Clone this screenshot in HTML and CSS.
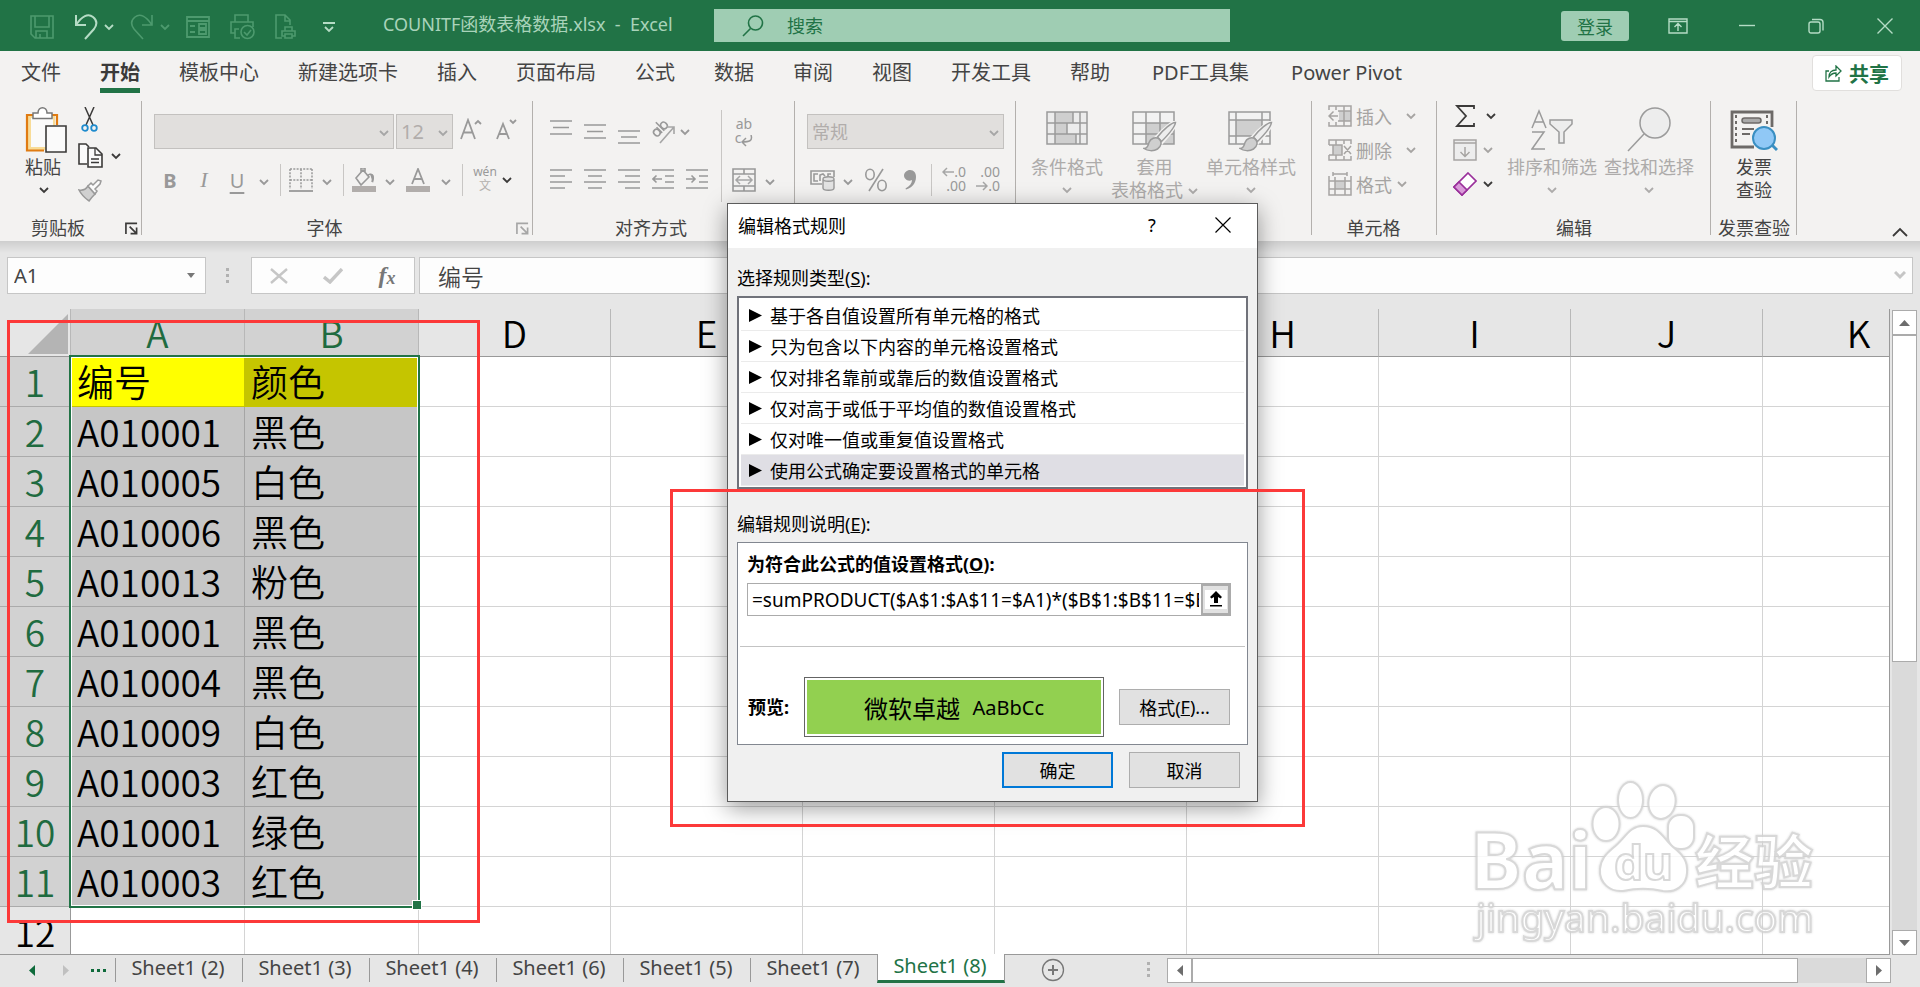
FILE: index.html
```html
<!DOCTYPE html>
<html lang="zh-CN">
<head>
<meta charset="utf-8">
<title>COUNITF函数表格数据.xlsx - Excel</title>
<link rel="stylesheet" href="styles.css">
</head>
<body>
<svg class="defs" aria-hidden="true">
  <symbol id="chev" viewBox="0 0 10 10"><path d="M1 3l4 4 4-4" fill="none" stroke="currentColor" stroke-width="1.8"/></symbol>
  <symbol id="launch" viewBox="0 0 14 14"><path d="M1 13V1.500h12M5 5l7 7M12.500 6v6.500H6" fill="none" stroke="currentColor" stroke-width="1.800"/></symbol>
  <symbol id="brush" viewBox="0 0 34 32"><path d="M33 1c-3 0-12 7-19 15l5 5C26 13 33 5 33 1z" fill="#f3f2f1" stroke="#f3f2f1" stroke-width="4"/><path d="M32.500 1.500C29 1 20 9 14.500 16l4 4.500C26 13 32 5 32.500 1.500z" fill="#ededed" stroke="#9b9b9b" stroke-width="1.500"/><path d="M1 27.500c4 0 4-3 5-6 1.500-4 6.500-6 9.500-4 4 2.500 3 8-1 10.500-4 2.500-10 2-13.500-.500z" fill="#cfcfcf" stroke="#9b9b9b" stroke-width="1.500"/></symbol>
</svg>
<div class="app">
  <header class="titlebar">
    <div class="quick">
      <button class="qbtn dim" aria-label="保存"><svg width="24" height="24" viewBox="0 0 24 24"><path d="M1 1h22v22H5l-4-4zM5 1v11h14V1M6 23v-7h11v7M10 23v-4" fill="none" stroke="currentColor" stroke-width="1.600"/></svg></button>
      <button class="qbtn" aria-label="撤消"><svg width="24" height="26" viewBox="0 0 24 26"><path d="M2 1v10h10M2 11C8 2 14-1 19 3c5 4 4 8 1 12l-9 10" fill="none" stroke="currentColor" stroke-width="2"/></svg></button>
      <svg class="ch qch"><use href="#chev"/></svg>
      <button class="qbtn dim" aria-label="恢复"><svg width="24" height="26" viewBox="0 0 24 26"><path d="M22 1v10H12M22 11C16 2 10-1 5 3 0 7 1 11 4 15l9 10" fill="none" stroke="currentColor" stroke-width="1.600"/></svg></button>
      <svg class="ch qch dim"><use href="#chev"/></svg>
      <button class="qbtn dim" aria-label="窗体"><svg width="24" height="24" viewBox="0 0 24 24"><path d="M1 2h22v20H1zM1 6h22M4 11h5M4 17h5M13 9h7v4h-7zM13 15h7v4h-7z" fill="none" stroke="currentColor" stroke-width="1.800"/></svg></button>
      <button class="qbtn dim" aria-label="打印预览"><svg width="25" height="26" viewBox="0 0 25 26"><path d="M5 8V1h13v7M5 19H1V8h22v5M9 15H5v9h5" fill="none" stroke="currentColor" stroke-width="1.600"/><circle cx="17.500" cy="18" r="6.500" fill="none" stroke="currentColor" stroke-width="1.600"/><path d="M14 18l3 3 4-5" fill="none" stroke="currentColor" stroke-width="1.600"/></svg></button>
      <button class="qbtn dim" aria-label="快速打印"><svg width="22" height="26" viewBox="0 0 22 26"><path d="M7 24H1V1h9l5 5v5M10 1v6h5M10 17v-4h7v4M10 22H7v-5h13v5h-3M10 20h7v4h-7z" fill="none" stroke="currentColor" stroke-width="1.600"/></svg></button>
      <button class="qbtn more" aria-label="自定义快速访问工具栏"><svg width="12" height="11" viewBox="0 0 12 11"><path d="M0 1h12M2 5l4 4 4-4" fill="none" stroke="currentColor" stroke-width="1.800"/></svg></button>
    </div>
    <h1 class="doc">COUNITF函数表格数据.xlsx&nbsp; -&nbsp; Excel</h1>
    <label class="search"><svg width="22" height="22" viewBox="0 0 22 22"><circle cx="13.500" cy="8" r="7" fill="none" stroke="currentColor" stroke-width="1.600"/><path d="M8.500 13.500L1 21" stroke="currentColor" stroke-width="1.600"/></svg><input type="text" placeholder="搜索" aria-label="搜索"></label>
    <div class="window-tools">
      <button class="login">登录</button>
      <button class="win" aria-label="功能区显示选项"><svg width="20" height="16" viewBox="0 0 20 16"><path d="M1 1h18v14H1zM1 3.500h18M10 13V6M6.500 9L10 5.500 13.500 9" fill="none" stroke="currentColor" stroke-width="1.400"/></svg></button>
      <button class="win" aria-label="最小化"><svg width="16" height="16" viewBox="0 0 16 16"><path d="M0 7.500h16" stroke="currentColor" stroke-width="1.400"/></svg></button>
      <button class="win" aria-label="还原"><svg width="16" height="16" viewBox="0 0 16 16"><rect x="1" y="4" width="11" height="11" rx="2" fill="none" stroke="currentColor" stroke-width="1.400"/><path d="M4 1.500h8q3 0 3 3v8" fill="none" stroke="currentColor" stroke-width="1.400"/></svg></button>
      <button class="win" aria-label="关闭"><svg width="16" height="16" viewBox="0 0 16 16"><path d="M.5.5l15 15M15.500.5l-15 15" stroke="currentColor" stroke-width="1.400"/></svg></button>
    </div>
  </header>

  <nav class="menu">
    <button class="tab">文件</button><button class="tab on">开始</button><button class="tab">模板中心</button><button class="tab">新建选项卡</button><button class="tab">插入</button><button class="tab">页面布局</button><button class="tab">公式</button><button class="tab">数据</button><button class="tab">审阅</button><button class="tab">视图</button><button class="tab">开发工具</button><button class="tab">帮助</button><button class="tab latin">PDF工具集</button><button class="tab latin">Power Pivot</button>
    <button class="share"><svg width="17" height="17" viewBox="0 0 17 17"><path d="M4 6H1v10h13v-4M4 12c0-5 3-7 7-7V1l5 5-5 5V8c-3 0-5 1-7 4z" fill="none" stroke="currentColor" stroke-width="1.300"/></svg>共享</button>
  </nav>

  <section class="ribbon">
    <div class="group g-clip">
      <div class="body">
        <button class="big paste"><svg width="42" height="46" viewBox="0 0 42 46"><path d="M3 8h27v35H3z" fill="#f8dc98"/><path d="M6 11h22v29H6z" fill="#fafafa"/><path d="M19 43.500H2V8h8M24 8h8v10" fill="none" stroke="#e07b12" stroke-width="2.200"/><path d="M8 11.500V6h5c0-7 9-7 9 0h5v5.500z" fill="#fff" stroke="#777" stroke-width="1.500"/><path d="M21 19h20v26H21z" fill="#fafafa" stroke="#3b3a39" stroke-width="1.600"/></svg><span>粘贴</span><svg class="ch"><use href="#chev"/></svg></button>
        <div class="clip-side">
          <button class="ic" aria-label="剪切"><svg width="17" height="25" viewBox="0 0 17 25"><path d="M4 0l8 18M13 0L5 18" stroke="#3b3a39" stroke-width="1.500"/><circle cx="4" cy="21" r="2.800" fill="none" stroke="#1e8bcd" stroke-width="1.800"/><circle cx="13" cy="21" r="2.800" fill="none" stroke="#1e8bcd" stroke-width="1.800"/></svg></button>
          <div class="pair"><button class="ic" aria-label="复制"><svg width="25" height="25" viewBox="0 0 25 25"><path d="M9 21H1V1h7l3 3" fill="#fafafa" stroke="#3b3a39" stroke-width="1.600"/><path d="M10 5h8l6 6v13H10z" fill="#fafafa" stroke="#3b3a39" stroke-width="1.600"/><path d="M17 5v7h7M13 16h8M13 19.500h8" fill="none" stroke="#3b3a39" stroke-width="1.300"/></svg></button><svg class="ch"><use href="#chev"/></svg></div>
          <button class="ic" aria-label="格式刷"><svg width="24" height="23" viewBox="0 0 24 23"><path d="M1 11c5 1 7-1 9-4l7 8c-2 2-4 4-6 7C7 19 4 17 1 11z" fill="#d0d0d0" stroke="#999" stroke-width="1.500"/><path d="M10 7l3-3 2 2 5-5 3 1-1 3-5 5 2 2-2 3z" fill="#fafafa" stroke="#999" stroke-width="1.500"/></svg></button>
        </div>
      </div>
      <div class="glabel">剪贴板<svg class="launch"><use href="#launch"/></svg></div>
    </div>

    <div class="group g-font">
      <div class="body rows">
        <div class="row1">
          <label class="combo c-font"><select aria-label="字体"><option></option></select><svg class="ch"><use href="#chev"/></svg></label>
          <label class="combo c-size"><select aria-label="字号"><option>12</option></select><svg class="ch"><use href="#chev"/></svg></label>
          <button class="ic grow" aria-label="增大字号"><svg width="22" height="22" viewBox="0 0 22 22"><path d="M1 21L8 2l7 19M3.500 14.500h9M15 6l3-3 3 3" fill="none" stroke="currentColor" stroke-width="1.800"/></svg></button>
          <button class="ic shrink" aria-label="减小字号"><svg width="22" height="22" viewBox="0 0 22 22"><path d="M1 21L7 6l6 15M3 16h8M14 2l3 3 3-3" fill="none" stroke="currentColor" stroke-width="1.800"/></svg></button>
        </div>
        <div class="row2">
          <button class="t34 bold">B</button><button class="t34 ital">I</button><button class="t34 und">U</button><svg class="ch wide"><use href="#chev"/></svg>
          <i class="vs"></i>
          <button class="t30" aria-label="边框"><svg width="24" height="24" viewBox="0 0 24 24"><path d="M1 1h22M1 1v20M23 1v20M12 1v20M1 12h22" fill="none" stroke="currentColor" stroke-width="1.500" stroke-dasharray="2 1.300"/><path d="M0 23h24" stroke="currentColor" stroke-width="1.800"/></svg></button><svg class="ch wide"><use href="#chev"/></svg>
          <i class="vs"></i>
          <button class="t30" aria-label="填充颜色"><svg width="24" height="24" viewBox="0 0 24 24"><path d="M4 10l7-8 6 7-8 8zM9 5V0h4v4M15 8c4-4 7-1 5 6" fill="none" stroke="currentColor" stroke-width="1.600"/><path d="M18 6c4-1 5 3 3 9z" fill="currentColor"/><path d="M0 18h24v6H0z" fill="#b1adab"/></svg></button><svg class="ch wide"><use href="#chev"/></svg>
          <button class="t34" aria-label="字体颜色"><svg width="24" height="24" viewBox="0 0 24 24"><path d="M6 16L12 1l6 15M8 11h8" fill="none" stroke="currentColor" stroke-width="1.800"/><path d="M0 18h24v6H0z" fill="#b1adab"/></svg></button><svg class="ch wide"><use href="#chev"/></svg>
          <i class="vs"></i>
          <button class="t34 wen"><span>wén</span><span>文</span></button><svg class="ch dark"><use href="#chev"/></svg>
        </div>
      </div>
      <div class="glabel">字体<svg class="launch off"><use href="#launch"/></svg></div>
    </div>

    <div class="group g-align">
      <div class="body">
        <div class="rows">
          <div class="row1">
            <button class="t34" aria-label="顶端对齐"><svg width="22" height="24" viewBox="0 0 22 24"><path d="M0 1h22M3 7.500h16M0 14h22" stroke="currentColor" stroke-width="1.600"/></svg></button>
            <button class="t34" aria-label="垂直居中"><svg width="22" height="24" viewBox="0 0 22 24"><path d="M0 5h22M3 11.500h16M0 18h22" stroke="currentColor" stroke-width="1.600"/></svg></button>
            <button class="t34" aria-label="底端对齐"><svg width="22" height="24" viewBox="0 0 22 24"><path d="M0 11h22M3 17h16M0 23h22" stroke="currentColor" stroke-width="1.600"/></svg></button>
            <button class="t34" aria-label="方向"><svg width="24" height="24" viewBox="0 0 24 24"><g transform="rotate(-45 8 9)" fill="none" stroke="currentColor" stroke-width="1.600"><ellipse cx="4" cy="10" rx="3" ry="3.500"/><path d="M7.500 6v8M10.500 2v12"/><ellipse cx="14" cy="10" rx="3" ry="3.500"/></g><path d="M9 23L23 7M16 7h7v7" fill="none" stroke="#a6a6a6" stroke-width="1.600"/></svg></button>
            <svg class="ch"><use href="#chev"/></svg>
          </div>
          <div class="row2">
            <button class="t34" aria-label="左对齐"><svg width="22" height="22" viewBox="0 0 22 22"><path d="M0 1h22M0 7h15M0 13h22M0 19h15" stroke="currentColor" stroke-width="1.600"/></svg></button>
            <button class="t34" aria-label="居中"><svg width="22" height="22" viewBox="0 0 22 22"><path d="M0 1h22M4 7h14M0 13h22M4 19h14" stroke="currentColor" stroke-width="1.600"/></svg></button>
            <button class="t34" aria-label="右对齐"><svg width="22" height="22" viewBox="0 0 22 22"><path d="M0 1h22M7 7h15M0 13h22M7 19h15" stroke="currentColor" stroke-width="1.600"/></svg></button>
            <button class="t34" aria-label="减少缩进"><svg width="22" height="22" viewBox="0 0 22 22"><path d="M0 1h22M13 7h9M13 13h9M0 19h22M1 10h9M4.500 6.500L1 10l3.500 3.500" fill="none" stroke="currentColor" stroke-width="1.600"/></svg></button>
            <button class="t34" aria-label="增加缩进"><svg width="22" height="22" viewBox="0 0 22 22"><path d="M0 1h22M13 7h9M13 13h9M0 19h22M0 10h9M5.500 6.500L9 10l-3.500 3.500" fill="none" stroke="currentColor" stroke-width="1.600"/></svg></button>
          </div>
        </div>
        <i class="vs tall"></i>
        <div class="rows">
          <div class="row1"><button class="t34 wrap" aria-label="自动换行"><span>ab</span><span>c<svg width="12" height="12" viewBox="0 0 12 12"><path d="M10 0c2 6-2 7-9 7M5 3L1 7l4 4" fill="none" stroke="currentColor" stroke-width="1.500"/></svg></span></button></div>
          <div class="row2"><button class="t34" aria-label="合并后居中"><svg width="24" height="24" viewBox="0 0 24 24"><path d="M1 1h22v22H1zM1 6h22M1 18h22M12 1v5M12 18v5" fill="none" stroke="currentColor" stroke-width="1.600"/><path d="M4 12h16M8 8l-4 4 4 4M16 8l4 4-4 4" fill="none" stroke="#a6a6a6" stroke-width="1.500"/></svg></button><svg class="ch wide"><use href="#chev"/></svg></div>
        </div>
      </div>
      <div class="glabel">对齐方式</div>
    </div>

    <div class="group g-num">
      <div class="body rows">
        <div class="row1"><label class="combo c-num"><select aria-label="数字格式"><option>常规</option></select><svg class="ch"><use href="#chev"/></svg></label></div>
        <div class="row2">
          <button class="t30" aria-label="会计数字格式"><svg width="25" height="22" viewBox="0 0 25 22"><path d="M12 15H1V2h23v6M8 5H4v7h4M10 12V6l3-1 2 2M18 8V5h3" fill="none" stroke="currentColor" stroke-width="1.600"/><path d="M13 10v9c0 3 11 3 11 0v-9c0-3-11-3-11 0zc0 3 11 3 11 0" fill="#e3e3e3" stroke="currentColor" stroke-width="1.400"/></svg></button><svg class="ch wide"><use href="#chev"/></svg>
          <button class="t34" aria-label="百分比样式"><svg width="24" height="24" viewBox="0 0 24 24"><path d="M19 1L5 23" stroke="currentColor" stroke-width="1.600"/><ellipse cx="6" cy="6.500" rx="4.200" ry="5.200" fill="none" stroke="currentColor" stroke-width="1.600"/><ellipse cx="18" cy="17.500" rx="4.200" ry="5.200" fill="none" stroke="currentColor" stroke-width="1.600"/></svg></button>
          <button class="t34" aria-label="千位分隔样式"><svg width="12" height="20" viewBox="0 0 12 20"><path d="M6 0c4 0 6 3 6 7 0 6-4 11-10 12.500l-.5-1C6 16 8 13 8 10 4 12 0 9 0 5.500 0 2.500 3 0 6 0z" fill="currentColor"/></svg></button>
          <i class="vs"></i>
          <button class="t34 dec" aria-label="增加小数位数"><span><svg width="12" height="10" viewBox="0 0 12 10"><path d="M12 5H1M5 1L1 5l4 4" fill="none" stroke="#a6a6a6" stroke-width="1.500"/></svg>.0</span><span>.00</span></button>
          <button class="t34 dec" aria-label="减少小数位数"><span>.00</span><span><svg width="12" height="10" viewBox="0 0 12 10"><path d="M0 5h11M7 1l4 4-4 4" fill="none" stroke="#a6a6a6" stroke-width="1.500"/></svg>.0</span></button>
        </div>
      </div>
      <div class="glabel"></div>
    </div>

    <div class="group g-style">
      <div class="body">
        <button class="big off"><svg width="42" height="34" viewBox="0 0 42 42"><path d="M1 1h40v32H1z" fill="#ececec"/><path d="M9 1h18v11H9zM9 12h12v11H9zM9 23h21v10H9z" fill="#cfcfcf"/><path d="M1 1h40v32H1zM1 12h40M1 23h40M9 1v32M34 1v32M27 1v11M21 12v11M30 23v10" fill="none" stroke="#9b9b9b" stroke-width="1.500"/></svg><span>条件格式</span><svg class="ch"><use href="#chev"/></svg></button>
        <button class="big off"><svg width="46" height="42" viewBox="0 0 46 42"><path d="M1 1h41v32H1z" fill="#f2f2f2"/><path d="M14 12h28v21H14z" fill="#cfcfcf"/><path d="M1 1h41v32H1zM1 12h41M1 23h41M14 1v32M28 1v32" fill="none" stroke="#9b9b9b" stroke-width="1.500"/><use href="#brush" x="11" y="10" width="34" height="32"/></svg><span>套用</span><span class="inline">表格格式 <svg class="ch"><use href="#chev"/></svg></span></button>
        <button class="big off"><svg width="46" height="42" viewBox="0 0 46 42"><path d="M1 1h41v32H1z" fill="#f2f2f2"/><path d="M8 9h26v16H8z" fill="#cfcfcf"/><path d="M1 1h41v32H1zM1 9h41M1 25h41M8 1v32M34 1v32" fill="none" stroke="#9b9b9b" stroke-width="1.500"/><use href="#brush" x="11" y="10" width="34" height="32"/></svg><span>单元格样式</span><svg class="ch"><use href="#chev"/></svg></button>
      </div>
      <div class="glabel"></div>
    </div>

    <div class="group g-cell">
      <div class="body stack">
        <button class="line"><svg width="24" height="22" viewBox="0 0 24 22"><path d="M11 6h12v10H11z" fill="#cfcfcf"/><path d="M1 5V1h22v20H1v-4M10 6h13M10 16h13M8 1v4M16 1v20M8 17v4M10 11H1M5.500 6.500L1 11l4.500 4.500" fill="none" stroke="currentColor" stroke-width="1.500"/></svg><span>插入</span><svg class="ch"><use href="#chev"/></svg></button>
        <button class="line"><svg width="24" height="22" viewBox="0 0 24 22"><path d="M5 6h9v9H5z" fill="#cfcfcf"/><path d="M1 6V1h22v4M1 16v5h22v-4M1 6h13v10H1M5 6v10M8 1v5M16 1v4M8 16v5M16 17v4M16 7l7 8M23 7l-7 8" fill="none" stroke="currentColor" stroke-width="1.500"/></svg><span>删除</span><svg class="ch"><use href="#chev"/></svg></button>
        <button class="line near"><svg width="24" height="24" viewBox="0 0 24 24"><path d="M7 9h10v8H7z" fill="#cfcfcf"/><path d="M1 4v19h22V4M1 9h22M1 17h22M7 5v18M17 5v18M5 2h14M5 0v4M19 0v4" fill="none" stroke="currentColor" stroke-width="1.500"/></svg><span>格式</span><svg class="ch"><use href="#chev"/></svg></button>
      </div>
      <div class="glabel">单元格</div>
    </div>

    <div class="group g-edit">
      <div class="body">
        <div class="stack">
          <button class="line dark far" aria-label="自动求和"><svg width="24" height="22" viewBox="0 0 24 22"><path d="M21 4V1H4l9 10L4 21h17v-3" fill="none" stroke="currentColor" stroke-width="1.800"/></svg><svg class="ch"><use href="#chev"/></svg></button>
          <button class="line" aria-label="填充"><svg width="24" height="22" viewBox="0 0 24 22"><path d="M1 1h22v20H1zM1 4h22M12 8v9M7.500 13l4.500 4.500 4.500-4.500" fill="#ededed" stroke="currentColor" stroke-width="1.500"/></svg><svg class="ch"><use href="#chev"/></svg></button>
          <button class="line dark" aria-label="清除"><svg width="24" height="24" viewBox="0 0 24 24"><path d="M15 1l8 8L9 23l-8-8z" fill="#fff" stroke="#9a309b" stroke-width="1.700"/><path d="M6 10l8 8-5 5-8-8z" fill="#d99ad9" stroke="#9a309b" stroke-width="1.700"/></svg><svg class="ch"><use href="#chev"/></svg></button>
        </div>
        <button class="big off"><svg width="42" height="42" viewBox="0 0 42 42"><path d="M1 19L8 2l7 17M3.500 13h9M1 23h12L1 40h13" fill="none" stroke="#9b9b9b" stroke-width="1.500"/><path d="M19 11h22v4l-8 8v11h-5V23l-9-8z" fill="#ededed" stroke="#9b9b9b" stroke-width="1.500"/></svg><span>排序和筛选</span><svg class="ch"><use href="#chev"/></svg></button>
        <button class="big off"><svg width="44" height="46" viewBox="0 0 44 46"><circle cx="28" cy="16" r="15" fill="#ededed" stroke="#9b9b9b" stroke-width="1.500"/><path d="M17 27L1 44" stroke="#9b9b9b" stroke-width="1.500"/></svg><span>查找和选择</span><svg class="ch"><use href="#chev"/></svg></button>
      </div>
      <div class="glabel">编辑</div>
    </div>

    <div class="group g-inv">
      <div class="body">
        <button class="big"><svg width="48" height="42" viewBox="0 0 48 42"><path d="M24 37H2V2h40v15" fill="none" stroke="#6d6a68" stroke-width="2.800"/><path d="M6 5v29M37 5v10" stroke="#6d6a68" stroke-width="2" stroke-dasharray="3 3"/><rect x="12" y="8" width="19" height="5" rx="2.500" fill="#aaa" stroke="#6d6a68" stroke-width="1.500"/><path d="M12 19h12M12 24h8" stroke="#6d6a68" stroke-width="2"/><path d="M41 34l6 6" stroke="#3a8fc2" stroke-width="3"/><circle cx="34" cy="28" r="11" fill="#90c8f6" stroke="#3a8fc2" stroke-width="2"/></svg><span>发票</span><span>查验</span></button>
      </div>
      <div class="glabel">发票查验</div>
    </div>
    <button class="collapse" aria-label="折叠功能区"><svg width="16" height="10" viewBox="0 0 16 10"><path d="M1 9l7-7 7 7" fill="none" stroke="currentColor" stroke-width="1.800"/></svg></button>
  </section>

  <section class="formula">
    <label class="namebox"><input type="text" value="A1" aria-label="名称框"><svg width="8" height="5" viewBox="0 0 8 5"><path d="M0 0h8L4 5z" fill="#777"/></svg></label>
    <svg class="dots" width="3" height="16" viewBox="0 0 3 16"><path d="M0 0h3v3H0zM0 6h3v3H0zM0 12h3v3H0z" fill="#b1b1b1"/></svg>
    <div class="fx">
      <button aria-label="取消"><svg width="18" height="16" viewBox="0 0 18 16"><path d="M1 1l16 14M17 1L1 15" stroke="#c6c6c6" stroke-width="2.400"/></svg></button>
      <button aria-label="输入"><svg width="20" height="16" viewBox="0 0 20 16"><path d="M1 9l6 5L19 1" fill="none" stroke="#c6c6c6" stroke-width="3.400"/></svg></button>
      <button class="fxi" aria-label="插入函数">f<span>x</span></button>
    </div>
    <label class="fbar"><input type="text" value="编号" aria-label="编辑栏"><svg width="12" height="9" viewBox="0 0 12 9"><path d="M1 1l5 5 5-5" fill="none" stroke="#c6c6c6" stroke-width="3"/></svg></label>
  </section>

  <main class="work">
    <div class="sheet">
      <table>
        <colgroup><col class="c-head"><col class="c-ab"><col class="c-ab"><col class="c-std"><col class="c-std"><col class="c-std"><col class="c-std"><col class="c-std"><col class="c-std"><col class="c-std"><col class="c-std"></colgroup>
        <thead><tr><th class="corner"><svg width="40" height="40" viewBox="0 0 40 40"><path d="M40 0v40H0z" fill="#b4b4b4"/></svg></th><th class="sel">A</th><th class="sel">B</th><th>D</th><th>E</th><th></th><th></th><th>H</th><th>I</th><th>J</th><th>K</th></tr></thead>
        <tbody>
          <tr class="s y"><th>1</th><td>编号</td><td>颜色</td><td></td><td></td><td></td><td></td><td></td><td></td><td></td><td></td></tr>
          <tr class="s"><th>2</th><td>A010001</td><td>黑色</td><td></td><td></td><td></td><td></td><td></td><td></td><td></td><td></td></tr>
          <tr class="s"><th>3</th><td>A010005</td><td>白色</td><td></td><td></td><td></td><td></td><td></td><td></td><td></td><td></td></tr>
          <tr class="s"><th>4</th><td>A010006</td><td>黑色</td><td></td><td></td><td></td><td></td><td></td><td></td><td></td><td></td></tr>
          <tr class="s"><th>5</th><td>A010013</td><td>粉色</td><td></td><td></td><td></td><td></td><td></td><td></td><td></td><td></td></tr>
          <tr class="s"><th>6</th><td>A010001</td><td>黑色</td><td></td><td></td><td></td><td></td><td></td><td></td><td></td><td></td></tr>
          <tr class="s"><th>7</th><td>A010004</td><td>黑色</td><td></td><td></td><td></td><td></td><td></td><td></td><td></td><td></td></tr>
          <tr class="s"><th>8</th><td>A010009</td><td>白色</td><td></td><td></td><td></td><td></td><td></td><td></td><td></td><td></td></tr>
          <tr class="s"><th>9</th><td>A010003</td><td>红色</td><td></td><td></td><td></td><td></td><td></td><td></td><td></td><td></td></tr>
          <tr class="s"><th>10</th><td>A010001</td><td>绿色</td><td></td><td></td><td></td><td></td><td></td><td></td><td></td><td></td></tr>
          <tr class="s"><th>11</th><td>A010003</td><td>红色</td><td></td><td></td><td></td><td></td><td></td><td></td><td></td><td></td></tr>
          <tr><th>12</th><td></td><td></td><td></td><td></td><td></td><td></td><td></td><td></td><td></td><td></td></tr>
        </tbody>
      </table>
      <div class="selection"></div>
    </div>
    <div class="vscroll">
      <button aria-label="向上"><svg width="11" height="6" viewBox="0 0 11 6"><path d="M0 6h11L5.500 0z" fill="#6d6d6d"/></svg></button>
      <div class="thumb"></div>
      <div class="track"></div>
      <button aria-label="向下"><svg width="11" height="6" viewBox="0 0 11 6"><path d="M0 0h11L5.500 6z" fill="#6d6d6d"/></svg></button>
    </div>
  </main>

  <footer class="tabs">
    <div class="nav"><button aria-label="上一个"><svg width="6" height="11" viewBox="0 0 6 11"><path d="M6 0v11L0 5.500z" fill="#0e6a3b"/></svg></button><button aria-label="下一个"><svg width="6" height="11" viewBox="0 0 6 11"><path d="M0 0v11l6-5.500z" fill="#c0c0c0"/></svg></button><button aria-label="更多工作表"><svg width="16" height="3" viewBox="0 0 16 3"><path d="M0 0h3v3H0zM6 0h3v3H6zM12 0h3v3h-3z" fill="#0e6a3b"/></svg></button></div>
    <button class="st">Sheet1 (2)</button><button class="st">Sheet1 (3)</button><button class="st">Sheet1 (4)</button><button class="st">Sheet1 (6)</button><button class="st">Sheet1 (5)</button><button class="st">Sheet1 (7)</button><button class="st on">Sheet1 (8)</button>
    <button class="add" aria-label="新工作表"><svg width="24" height="24" viewBox="0 0 24 24"><circle cx="12" cy="12" r="10.500" fill="none" stroke="#777" stroke-width="1.300"/><path d="M12 7v10M7 12h10" stroke="#777" stroke-width="2"/></svg></button>
    <svg class="tdots" width="3" height="16" viewBox="0 0 3 16"><path d="M0 0h3v3H0zM0 6h3v3H0zM0 12h3v3H0z" fill="#b1b1b1"/></svg>
    <div class="hscroll">
      <button aria-label="向左"><svg width="6" height="11" viewBox="0 0 6 11"><path d="M6 0v11L0 5.500z" fill="#6d6d6d"/></svg></button>
      <div class="thumb"></div>
      <div class="track"></div>
      <button aria-label="向右"><svg width="6" height="11" viewBox="0 0 6 11"><path d="M0 0v11l6-5.500z" fill="#6d6d6d"/></svg></button>
    </div>
  </footer>

  <div class="watermark">
    <svg width="360" height="180" viewBox="0 0 360 180">
      <g class="logo">
        <text x="8" y="119" class="w-bai">Bai</text>
        <ellipse cx="144" cy="54" rx="13.500" ry="17"/><ellipse cx="168.500" cy="30" rx="12.500" ry="18"/><ellipse cx="200" cy="32" rx="13.500" ry="17" transform="rotate(10 200 32)"/><rect x="206" y="45" width="26" height="34" rx="12"/>
        <path d="M181 56c16 0 20 12 30 21 10 8 15 14 14 26-1 13-12 20-24 18-14-3-26-3-40 0-13 1-24-8-23-22 1-10 6-15 13-21 12-9 16-22 30-22z"/>
        <text x="152" y="110" class="w-du">du</text>
        <text x="233" y="114" class="w-cn">经验</text>
        <text x="14" y="162" class="w-url">jingyan.baidu.com</text>
      </g>
    </svg>
  </div>

  <div class="dialog" role="dialog" aria-label="编辑格式规则">
    <div class="d-title"><span>编辑格式规则</span><button class="help">?</button><button class="close" aria-label="关闭"><svg width="16" height="16" viewBox="0 0 16 16"><path d="M.5.5l15 15M15.500.5l-15 15" stroke="#000" stroke-width="1.200"/></svg></button></div>
    <div class="d-body">
      <p class="d-label">选择规则类型(<u>S</u>):</p>
      <ul class="rules">
        <li><svg class="tri" viewBox="0 0 13 13"><path d="M0 0l13 6.500L0 13z"/></svg>基于各自值设置所有单元格的格式</li>
        <li><svg class="tri" viewBox="0 0 13 13"><path d="M0 0l13 6.500L0 13z"/></svg>只为包含以下内容的单元格设置格式</li>
        <li><svg class="tri" viewBox="0 0 13 13"><path d="M0 0l13 6.500L0 13z"/></svg>仅对排名靠前或靠后的数值设置格式</li>
        <li><svg class="tri" viewBox="0 0 13 13"><path d="M0 0l13 6.500L0 13z"/></svg>仅对高于或低于平均值的数值设置格式</li>
        <li><svg class="tri" viewBox="0 0 13 13"><path d="M0 0l13 6.500L0 13z"/></svg>仅对唯一值或重复值设置格式</li>
        <li class="on"><svg class="tri" viewBox="0 0 13 13"><path d="M0 0l13 6.500L0 13z"/></svg>使用公式确定要设置格式的单元格</li>
      </ul>
      <p class="d-label second">编辑规则说明(<u>E</u>):</p>
      <div class="desc">
        <div class="cond">
          <label class="b" for="fml">为符合此公式的值设置格式(<u>O</u>):</label>
          <div class="ref"><input id="fml" type="text" value="=sumPRODUCT($A$1:$A$11=$A1)*($B$1:$B$11=$B1)>1"><button aria-label="折叠对话框"><svg width="22" height="19" viewBox="0 0 22 19"><path d="M0 0h22v19H0z" fill="#fff"/><path d="M11 1l6 6-1.500 1.500L13 7v6H9V7L6.500 8.500 5 7zM5 15h12v1.500H5z" fill="#000"/></svg></button></div>
        </div>
        <div class="prev"><span class="b">预览:</span><div class="sample"><div>微软卓越&nbsp; <small>AaBbCc</small></div></div><button class="dbtn">格式(<u>F</u>)...</button></div>
      </div>
      <div class="actions"><button class="dbtn ok">确定</button><button class="dbtn">取消</button></div>
    </div>
  </div>
  <div class="frame frame-table"></div>
  <div class="frame frame-desc"></div>
</div>
</body>
</html>
```
FILE: styles.css
```css
* { box-sizing: border-box; }
body { margin: 0; font-family: "Noto Sans", "Noto Sans CJK SC", sans-serif; font-size: 18px; color: #444; overflow: hidden; }
button, input, select { font: inherit; color: inherit; border: 0; background: none; padding: 0; margin: 0; }
button { display: flex; align-items: center; justify-content: center; }
svg { display: block; flex: none; }
.defs { position: absolute; width: 0; height: 0; }
.app { position: relative; display: flex; flex-direction: column; height: 100vh; background: #e6e6e6; }
.ch { width: 10px; height: 10px; }

/* title bar */
.titlebar { display: flex; align-items: center; height: 51px; background: #217346; color: #b5dcc5; flex: none; position: relative; }
.quick { display: flex; align-items: center; padding-left: 30px; width: 383px; padding-top: 3px; }
.qbtn { margin-right: 20px; }
.qbtn + .qch { margin-left: -14px; margin-right: 16px; }
.dim { color: #4d9a6e; }
.more { margin-left: 6px; margin-right: 0; }
.doc { margin: 0; font-size: 18px; font-weight: 400; line-height: 24px; padding-bottom: 4px; color: #a9d3ba; width: 331px; white-space: nowrap; }
.search { display: flex; align-items: center; width: 516px; height: 33px; background: #9fcdb3; padding-left: 28px; gap: 23px; color: #217346; }
.search input { flex: 1; min-width: 0; }
.search input::placeholder { color: #217346; opacity: 1; }
.window-tools { display: flex; align-items: center; margin-left: auto; padding-right: 1px; }
.login { width: 68px; height: 30px; background: #9fcdb3; color: #217346; border-radius: 3px; margin-right: 14px; }
.win { width: 69px; height: 50px; }

/* menu */
.menu { display: flex; align-items: flex-start; gap: 39px; height: 50px; padding: 8px 18px 0 21px; background: #f3f2f1; flex: none; }
.tab { font-size: 20px; line-height: 28px; height: 34px; align-items: flex-start; border-bottom: 0 solid #217346; white-space: nowrap; }
.tab.on { font-weight: 700; border-bottom-width: 5px; color: #3b3a39; }
.tab.latin { padding-left: 3px; }
.share { margin-left: auto; margin-top: -4px; width: 90px; height: 36px; background: #fff; border: 1px solid #e1dfdd; border-radius: 4px; color: #217346; font-size: 20px; font-weight: 700; gap: 7px; }

/* ribbon */
.ribbon { display: flex; height: 140px; background: #f3f2f1; flex: none; position: relative; }
.group { position: relative; display: flex; flex-direction: column; height: 140px; flex: none; color: #999; }
.group::after { content: ""; position: absolute; right: 0; top: 0; bottom: 6px; width: 1px; background: #b3b0ad; }
.group .body { height: 115px; display: flex; }
.glabel { line-height: 24px; text-align: center; color: #444; position: relative; }
.launch { position: absolute; right: 4px; top: 6px; width: 13px; height: 13px; color: #3b3a39; }
.launch.off { color: #a6a6a6; }
.big { flex-direction: column; justify-content: flex-start; color: #444; line-height: 23px; white-space: nowrap; }
.big > svg:first-child { height: 46px; margin-bottom: 3px; }
.big > .ch { margin-top: 6px; }
.big.off { color: #adabaa; }
.big .inline { display: flex; align-items: center; gap: 5px; }
.rows { display: flex; flex-direction: column; }
.group .rows { padding-top: 13px; gap: 15px; }
.row1 { display: flex; align-items: center; height: 35px; }
.row2 { display: flex; align-items: center; height: 32px; }
.t34 { width: 34px; height: 32px; }
.t30 { width: 30px; height: 32px; }
.wide { width: 10px; margin: 3px 6px 0; }
.vs { width: 1px; height: 32px; background: #c8c6c4; margin: 0 5px; }
.vs.tall { height: 92px; margin: 9px 0 0; }
.dark { color: #3b3a39; }
.combo { position: relative; display: flex; height: 35px; background: #e1dfdd; border: 1px solid #c3c1bf; color: #b1adab; font-size: 20px; }
.combo select { appearance: none; flex: 1; padding: 0 4px; opacity: 1; }
.combo .ch { position: absolute; right: 4px; top: 13px; color: #a6a6a6; }
.c-font { width: 240px; margin-right: 2px; }
.c-size { width: 57px; }
.c-num { width: 197px; font-size: 18px; }
.grow { margin: 0 0 6px 7px; }
.shrink { margin: 0 0 6px 14px; }

.g-clip { width: 142px; }
.g-clip .glabel { padding-right: 26px; }
.paste { width: 42px; margin: 6px 0 0 25px; }
.paste > svg:first-child { margin-bottom: 3px; }
.paste > span { margin-left: -6px; }
.paste > .ch { margin-left: -4px; color: #3b3a39; }
.clip-side { margin: 6px 0 0 11px; display: flex; flex-direction: column; gap: 11px; align-items: flex-start; }
.clip-side > button:first-child { margin-left: 3px; }
.pair { display: flex; align-items: center; gap: 8px; color: #3b3a39; }

.g-font { width: 391px; padding-left: 12px; }
.g-font .row2 { margin-left: -1px; }
.g-font .glabel { margin-left: -12px; padding-right: 26px; }
.bold { font-weight: 700; font-size: 20px; }
.ital { font-style: italic; font-size: 22px; font-family: "Liberation Serif", serif; }
.und { font-size: 20px; text-decoration: underline; text-underline-offset: 4px; width: 32px; }
.wen { flex-direction: column; font-size: 12px; line-height: 14px; padding-bottom: 2px; }
.wen span + span { color: #b3b0ad; }

.g-align { width: 262px; padding-left: 11px; }
.g-align .glabel { margin-left: -37px; }
.g-align .body .vs { margin-left: 7px; margin-right: 5px; }
.g-align .wide { margin-left: 4px; }
.wrap { flex-direction: column; font-size: 14px; line-height: 14px; }
.wrap span { display: flex; }
.wrap svg { margin-top: 4px; }

.g-num { width: 221px; padding-left: 12px; }
.g-num .vs { margin: 0 4px; }
.dec { flex-direction: column; align-items: flex-end; padding: 0 4px 2px 0; font-size: 14px; line-height: 14px; }
.dec span { display: flex; align-items: center; }

.g-style { width: 296px; }
.g-style .body { padding: 10px 0 0 15px; gap: 8px; align-items: flex-start; }
.g-style .big > svg:first-child { height: 42px; }

.stack { display: flex; flex-direction: column; gap: 10px; padding-top: 3px; }
.group .body.stack { padding-left: 16px; }
.line { height: 24px; justify-content: flex-start; gap: 4px; color: #a6a4a2; }
.line .ch { margin-left: 6px; }
.line.far .ch { margin-left: 9px; }
.g-cell { width: 125px; }
.g-cell .line .ch { margin-left: 10px; }
.g-cell .near .ch { margin-left: 1px; }
.g-cell .glabel { padding-right: 2px; }
.g-edit { width: 274px; }
.g-edit .stack { padding: 3px 0 0 16px; margin-right: 14px; }
.g-edit .line { gap: 0; width: 40px; }
.g-edit .line.dark { color: #3b3a39; }
.g-edit .big { margin: 6px 7px 0 0; }
.g-inv { width: 86px; }
.g-inv .body { justify-content: center; padding-top: 7px; }
.g-inv .big > svg:first-child { margin-bottom: 2px; }
.collapse { position: absolute; right: 12px; bottom: 4px; color: #3b3a39; }

/* formula bar */
.formula { display: flex; height: 68px; padding: 16px 7px 0; background: linear-gradient(#cecece, #e6e6e6 12px); flex: none; }
.namebox, .fx, .fbar { display: flex; align-items: center; height: 37px; background: #fdfdfd; border: 1px solid #c6c6c6; font-size: 20px; }
.namebox { width: 199px; padding: 0 10px 0 6px; }
.namebox input { flex: 1; min-width: 0; }
.dots { margin: 11px 22px 0 20px; }
.fx { width: 164px; margin-right: 4px; }
.fx button { flex: 1; }
.fxi { font: italic 700 24px "Liberation Serif", serif; color: #777; }
.fxi span { font-size: 18px; padding-top: 5px; }
.fbar { flex: 1; padding: 0 6px 0 18px; }
.fbar input { flex: 1; font-size: 23px; font-weight: 350; }

/* sheet */
.work { display: flex; flex: 1; min-height: 0; }
.sheet { position: relative; flex: 1; overflow: hidden; border-right: 1px solid #999; border-bottom: 1px solid #999; background: #fff; font-family: "Noto Sans CJK SC", sans-serif; font-size: 37px; line-height: 49px; }
table { table-layout: fixed; width: 1955px; border-spacing: 0; }
.c-head { width: 71px; }
.c-ab { width: 174px; }
.c-std { width: 192px; }
th, td { padding: 0; font-weight: 350; height: 50px; border-right: 1px solid #d4d4d4; border-bottom: 1px solid #d4d4d4; white-space: nowrap; }
thead th { height: 48px; line-height: 47px; background: #e6e6e6; color: #000; border-bottom-color: #999; border-right-color: #b8b8b8; }
thead .sel { background: #d2d2d2; color: #1f6b40; }
.corner svg { margin: 2px 2px 0 auto; }
tbody th { background: #e6e6e6; color: #000; border-right-color: #999; border-bottom-color: #ababab; text-align: center; }
.s th { background: #d2d2d2; color: #1f6b40; }
td { color: #000; text-align: left; padding-left: 6px; }
.s td:nth-child(2), .s td:nth-child(3) { background: #c6c6c6; border-color: #a5a5a5; }
.s.y td:nth-child(2) { background: #ff0; border-color: #c5c500; }
.s.y td:nth-child(3) { background: #c5c500; border-color: #c5c500; }
.selection { position: absolute; left: 69px; top: 46px; width: 351px; height: 553px; border: 2px solid #217346; box-shadow: inset 0 0 0 1px #fff; }
.selection::after { content: ""; position: absolute; right: -4px; bottom: -4px; width: 8px; height: 8px; background: #217346; border: 1px solid #fff; }
.vscroll { display: flex; flex-direction: column; width: 30px; padding: 1px 3px 0 2px; }
.vscroll button, .hscroll button { width: 25px; height: 25px; background: #fff; border: 1px solid #ababab; flex: none; }
.vscroll .thumb { width: 25px; flex: 327; background: #fff; border: 1px solid #ababab; }
.vscroll .track { width: 25px; flex: 269; background: #dadada; }

/* sheet tabs */
.tabs { display: flex; align-items: flex-start; height: 32px; flex: none; color: #444; position: relative; padding-right: 29px; }
.nav { display: flex; align-items: center; width: 115px; height: 30px; padding-left: 29px; }
.nav button { margin-right: 28px; }
.nav button + button { margin-right: 22px; }
.st { width: 127px; height: 24px; margin-top: 3px; padding: 0 2px 5px 0; font-size: 20px; line-height: 24px; border-left: 1px solid #999; white-space: nowrap; }
.st.on { width: 128px; height: 29px; margin-top: -1px; background: #fff; border-right: 1px solid #999; border-bottom: 3px solid #217346; color: #217346; padding-bottom: 2px; }
.add { margin: 3px 82px 0 36px; }
.tdots { margin: 7px 17px 0 0; }
.hscroll { display: flex; flex: 1; margin-top: 3px; }
.hscroll .thumb { flex: 607; height: 25px; background: #fff; border: 1px solid #ababab; }
.hscroll .track { flex: 68; height: 25px; background: #dadada; }

/* watermark */
.watermark { position: absolute; right: 98px; bottom: 37px; }
.logo { fill: #fff; stroke: #d2d2d2; stroke-width: 2; opacity: .85; filter: drop-shadow(0 0 1px #ccc); }
.w-bai { font: 700 78px "Noto Sans", sans-serif; }
.w-du { font: 700 46px "Noto Sans", sans-serif; }
.w-cn { font: 700 59px "Noto Sans CJK SC", sans-serif; }
.w-url { font: 400 39px "Noto Sans", sans-serif; }

/* dialog */
.dialog { position: absolute; left: 727px; top: 203px; width: 531px; height: 599px; background: #f0f0f0; border: 1px solid #5c5c5c; box-shadow: 0 6px 22px rgba(0,0,0,.4); color: #000; }
.d-title { display: flex; align-items: center; height: 44px; background: #fff; padding: 0 26px 2px 10px; }
.d-title .help { margin-left: auto; width: 20px; margin-right: 53px; font-size: 18px; }
.d-body { padding: 18px 9px 0; }
.d-label { margin: 0 0 6px; line-height: 24px; }
.rules { list-style: none; margin: 0; padding: 2px; height: 193px; border: 2px solid #70727a; background: #fff; }
.rules li { display: flex; align-items: center; height: 31px; gap: 8px; padding-left: 8px; border-bottom: 1px solid #ebebeb; }
.rules .on { background: #dfdee4; }
.tri { width: 13px; height: 13px; }
.second { margin: 23px 0 6px; }
.desc { height: 203px; background: #fff; border: 1px solid #828790; }
.cond { height: 104px; margin: 0 2px; padding: 9px 14px 0 7px; border-bottom: 1px solid #c3c3c3; }
.b { font-weight: 700; display: block; line-height: 24px; }
.ref { display: flex; height: 33px; margin-top: 7px; border: 1px solid #ababab; }
.ref input { flex: 1; min-width: 0; padding: 0 2px 0 4px; font-size: 19px; }
.ref button { width: 29px; background: #e1e1e1; border: 2px solid #ababab; }
.prev { display: flex; align-items: center; padding: 30px 16px 0 10px; }
.prev .b { width: 56px; }
.sample { width: 300px; height: 60px; border: 1px solid #646464; padding: 2px; margin-right: 15px; }
.sample div { height: 100%; background: #92d050; display: flex; align-items: center; justify-content: center; font-size: 24px; white-space: pre; }
.sample small { font-size: 20px; }
.dbtn { width: 111px; height: 36px; background: #e1e1e1; border: 1px solid #adadad; }
.ok { border: 2px solid #0078d7; }
.actions { display: flex; justify-content: flex-end; gap: 16px; padding: 7px 8px 0 0; }

.frame { position: absolute; border: 3px solid #fc3939; }
.frame-table { left: 7px; top: 320px; width: 473px; height: 603px; }
.frame-desc { left: 670px; top: 489px; width: 635px; height: 338px; }
```
